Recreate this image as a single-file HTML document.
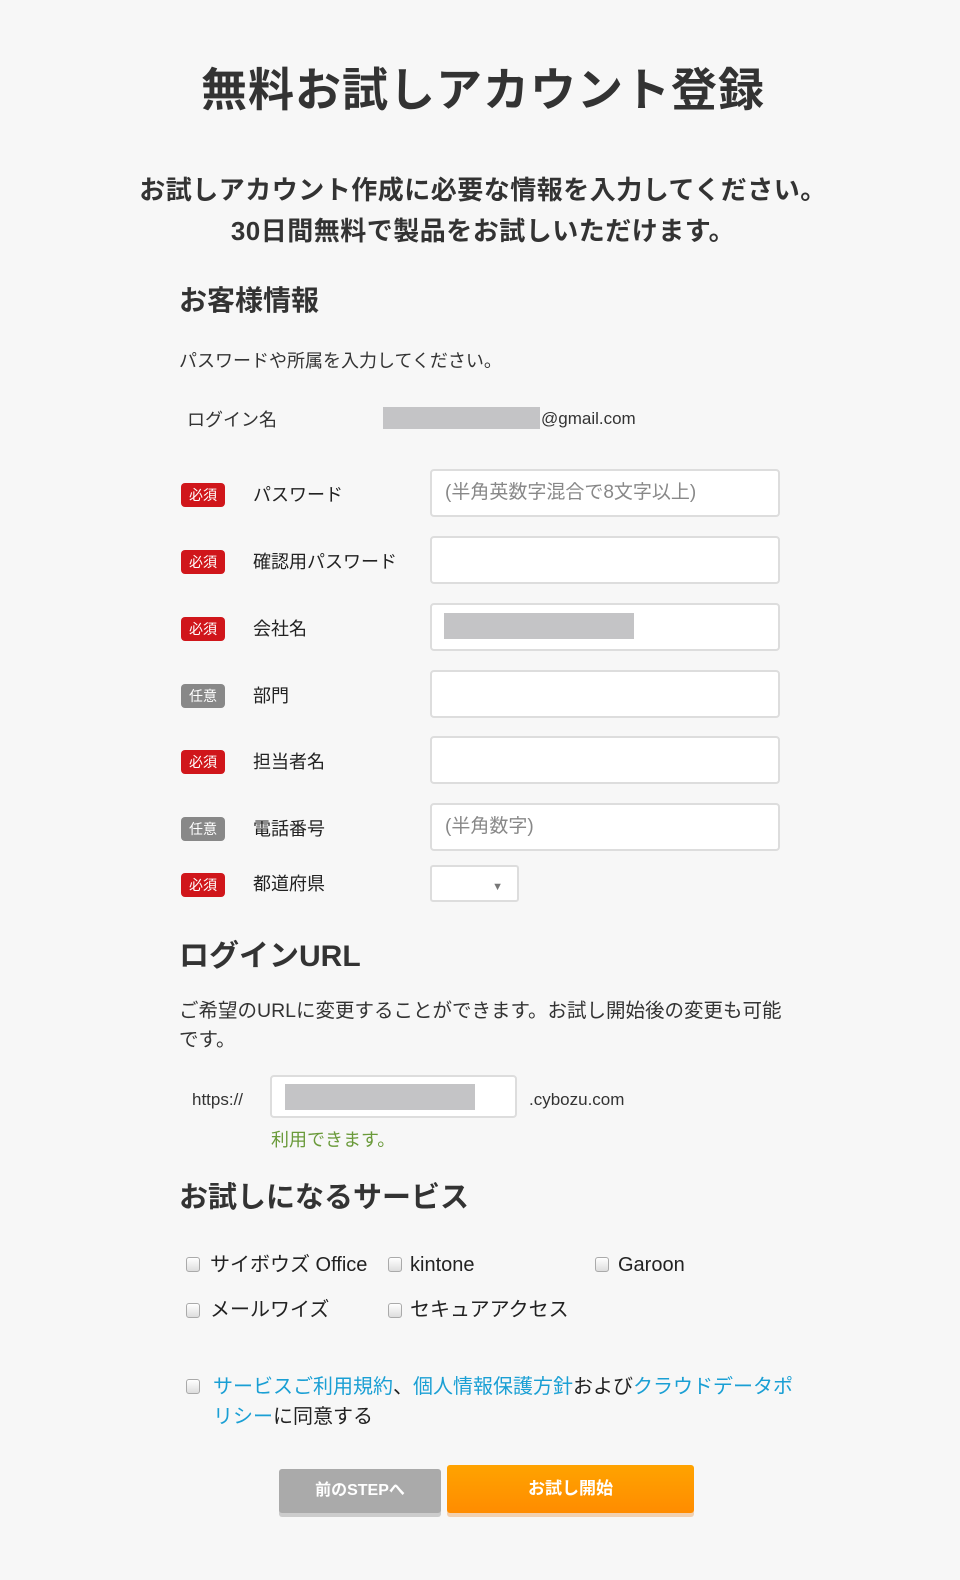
<!DOCTYPE html>
<html><head><meta charset="utf-8"><style>
body{margin:0;width:960px;height:1580px;background:#f7f7f7;font-family:"Liberation Sans","Noto Sans CJK JP",sans-serif;color:#333;position:relative;overflow:hidden}
.a{position:absolute;white-space:nowrap}
.badge{position:absolute;left:181px;width:44px;height:24px;border-radius:4px;color:#fff;font-size:14px;line-height:24px;text-align:center}
.req{background:#d0161b}.opt{background:#888}
.lab{position:absolute;left:253px;font-size:18px;color:#222}
.inp{position:absolute;left:430px;width:350px;height:48px;background:#fff;border:2px solid #ddd;border-radius:4px;box-sizing:border-box;font-size:19px;color:#888;padding-left:13px;line-height:44px}
.gray{background:#c4c4c6;position:absolute}
.cb{position:absolute;width:12px;height:13px;border:1px solid #aaa;border-radius:3px;background:linear-gradient(#fff,#ddd)}
.t18{font-size:20px;color:#222;line-height:30px;height:30px}
.lnk{color:#1a9fd4}
</style></head><body>
<div class="a" style="left:0;width:966px;text-align:center;top:54px;font-size:46px;font-weight:bold;color:#333;letter-spacing:1px">無料お試しアカウント登録</div>
<div class="a" style="left:0;width:966px;text-align:center;top:170px;font-size:26px;line-height:41px;color:#333;font-weight:bold;letter-spacing:0.5px">お試しアカウント作成に必要な情報を入力してください。<br>30日間無料で製品をお試しいただけます。</div>
<div class="a" style="left:179px;top:279px;font-size:28px;font-weight:bold">お客様情報</div>
<div class="a" style="left:179px;top:347px;font-size:18px">パスワードや所属を入力してください。</div>
<div class="a" style="left:187px;top:406px;font-size:18px">ログイン名</div>
<div class="gray" style="left:383px;top:407px;width:157px;height:22px"></div>
<div class="a" style="left:541px;top:409px;font-size:17px">@gmail.com</div>

<div class="badge req" style="top:483px">必須</div><div class="lab" style="top:481px">パスワード</div><div class="inp" style="top:469px">(半角英数字混合で8文字以上)</div>
<div class="badge req" style="top:550px">必須</div><div class="lab" style="top:548px">確認用パスワード</div><div class="inp" style="top:536px"></div>
<div class="badge req" style="top:617px">必須</div><div class="lab" style="top:615px">会社名</div><div class="inp" style="top:603px"></div><div class="gray" style="left:444px;top:613px;width:190px;height:26px"></div>
<div class="badge opt" style="top:684px">任意</div><div class="lab" style="top:682px">部門</div><div class="inp" style="top:670px"></div>
<div class="badge req" style="top:750px">必須</div><div class="lab" style="top:748px">担当者名</div><div class="inp" style="top:736px"></div>
<div class="badge opt" style="top:817px">任意</div><div class="lab" style="top:815px">電話番号</div><div class="inp" style="top:803px">(半角数字)</div>
<div class="badge req" style="top:873px">必須</div><div class="lab" style="top:870px">都道府県</div>
<div style="position:absolute;left:430px;top:865px;width:89px;height:37px;background:#fff;border:2px solid #ddd;box-sizing:border-box;border-radius:3px"><span style="position:absolute;right:14px;top:14px;font-size:11px;color:#777">▼</span></div>

<div class="a" style="left:179px;top:931px;font-size:30px;font-weight:bold">ログインURL</div>
<div class="a" style="left:179px;top:997px;font-size:19.5px;line-height:29px">ご希望のURLに変更することができます。お試し開始後の変更も可能<br>です。</div>
<div class="a" style="left:192px;top:1090px;font-size:17px">https://</div>
<div style="position:absolute;left:270px;top:1075px;width:247px;height:43px;background:#fff;border:2px solid #ddd;border-radius:4px;box-sizing:border-box"></div>
<div class="gray" style="left:285px;top:1084px;width:190px;height:26px"></div>
<div class="a" style="left:529px;top:1090px;font-size:17px">.cybozu.com</div>
<div class="a" style="left:271px;top:1126px;font-size:18px;color:#6a9a3a">利用できます。</div>

<div class="a" style="left:179px;top:1174px;font-size:29px;font-weight:bold">お試しになるサービス</div>
<div class="cb" style="left:186px;top:1257px"></div><div class="a t18" style="left:210px;top:1250px">サイボウズ Office</div>
<div class="cb" style="left:388px;top:1257px"></div><div class="a t18" style="left:410px;top:1250px">kintone</div>
<div class="cb" style="left:595px;top:1257px"></div><div class="a t18" style="left:618px;top:1250px">Garoon</div>
<div class="cb" style="left:186px;top:1303px"></div><div class="a t18" style="left:210px;top:1295px">メールワイズ</div>
<div class="cb" style="left:388px;top:1303px"></div><div class="a t18" style="left:410px;top:1295px">セキュアアクセス</div>

<div class="cb" style="left:186px;top:1379px"></div>
<div class="a" style="left:213px;top:1372px;font-size:20px;line-height:30px;color:#222"><span class="lnk">サービスご利用規約</span>、<span class="lnk">個人情報保護方針</span>および<span class="lnk">クラウドデータポ</span><br><span class="lnk">リシー</span>に同意する</div>

<div style="position:absolute;left:279px;top:1469px;width:162px;height:44px;background:#aaa;border-radius:3px;box-shadow:0 4px 0 #ccc;color:#fff;font-weight:bold;font-size:16px;text-align:center;line-height:44px">前のSTEPへ</div>
<div style="position:absolute;left:447px;top:1465px;width:247px;height:48px;background:linear-gradient(#ffa300,#ff8c00);border-radius:3px;box-shadow:0 4px 0 #f1d0b0;color:#fff;font-weight:bold;font-size:17px;text-align:center;line-height:48px">お試し開始</div>
</body></html>
